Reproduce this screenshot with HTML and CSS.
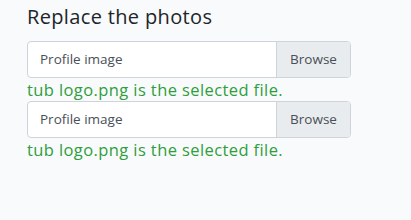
FILE: index.html
```html
<!DOCTYPE html>
<html>
<head>
<meta charset="utf-8">
<link rel="stylesheet" href="styles.css">
</head>
<body>
<div class="wrap">
  <h4 class="title">Replace the photos</h4>
  <div class="field">
    <div class="file">
      <span class="file-label">Profile image</span>
      <span class="browse">Browse</span>
    </div>
    <div class="feedback">tub logo.png is the selected file.</div>
  </div>
  <div class="field">
    <div class="file">
      <span class="file-label">Profile image</span>
      <span class="browse">Browse</span>
    </div>
    <div class="feedback">tub logo.png is the selected file.</div>
  </div>
</div>
</body>
</html>
```

FILE: styles.css
```css
html, body {
  margin: 0;
  padding: 0;
  background: #f8fafc;
}
body {
  font-family: "Open Sans", Lato, sans-serif;
  color: #212529;
  width: 411px;
  height: 220px;
}
.wrap {
  padding: 5px 0 0 27px;
  width: 324px;
}
.title {
  margin: 0 0 12px 0;
  font-size: 20px;
  font-weight: 400;
  line-height: 24px;
  letter-spacing: 0.35px;
}
.file {
  display: flex;
  height: 37px;
  box-sizing: border-box;
  border: 1px solid #ced4da;
  border-radius: 4px;
  background: #fff;
  overflow: hidden;
}
.file-label {
  flex: 1;
  padding-left: 12px;
  font-size: 13.5px;
  line-height: 35px;
  color: #495057;
}
.browse {
  width: 74px;
  box-sizing: border-box;
  border-left: 1px solid #ced4da;
  background: #e9ecef;
  color: #495057;
  font-size: 13.5px;
  line-height: 35px;
  text-align: center;
}
.feedback {
  color: #2f9e3b;
  font-size: 16.5px;
  line-height: 23px;
  letter-spacing: 0.4px;
}
```
